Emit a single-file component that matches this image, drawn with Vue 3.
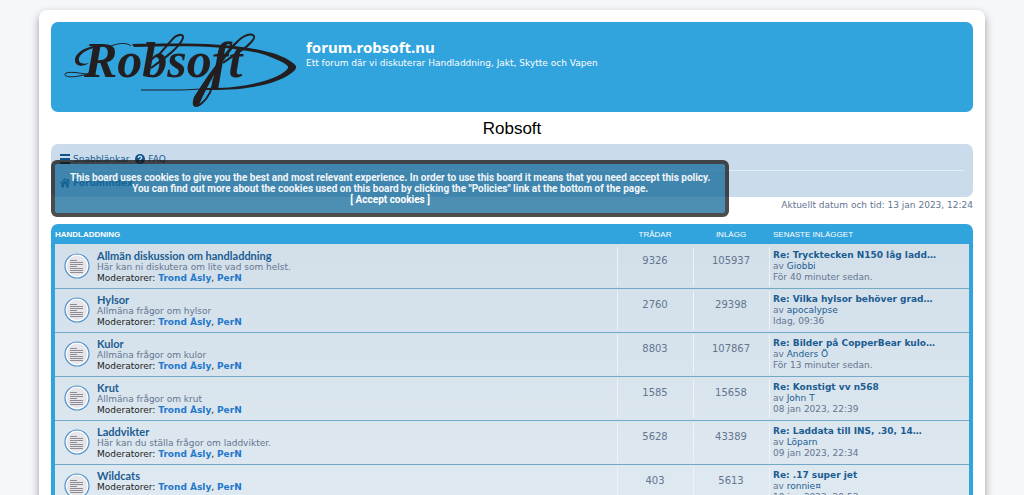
<script setup>
const forums = [
  { title: 'Allmän diskussion om handladdning', desc: 'Här kan ni diskutera om lite vad som helst.', topics: 9326, posts: 105937, last: 'Re: Trycktecken N150 låg ladd…', user: 'Giobbi', time: 'För 40 minuter sedan.' },
  { title: 'Hylsor', desc: 'Allmäna frågor om hylsor', topics: 2760, posts: 29398, last: 'Re: Vilka hylsor behöver grad…', user: 'apocalypse', time: 'Idag, 09:36' },
  { title: 'Kulor', desc: 'Allmäna frågor om kulor', topics: 8803, posts: 107867, last: 'Re: Bilder på CopperBear kulo…', user: 'Anders Ö', time: 'För 13 minuter sedan.' },
  { title: 'Krut', desc: 'Allmäna frågor om krut', topics: 1585, posts: 15658, last: 'Re: Konstigt vv n568', user: 'John T', time: '08 jan 2023, 22:39' },
  { title: 'Laddvikter', desc: 'Här kan du ställa frågor om laddvikter.', topics: 5628, posts: 43389, last: 'Re: Laddata till INS, .30, 14…', user: 'Löparn', time: '09 jan 2023, 22:34' },
  { title: 'Wildcats', desc: '', topics: 403, posts: 5613, last: 'Re: .17 super jet', user: 'ronnie¤', time: '10 jan 2023, 20:53' },
]
</script>

<template>
  <div class="wrap">
    <header class="headerbar">
      <a href="#" class="logo" aria-label="Robsoft">
        <svg width="236" height="78" viewBox="0 0 236 78">
          <text class="wordmark" x="21" y="45"><tspan class="initial">R</tspan>obsoft</text>
          <path d="M29 43C20 42 10 39 3 41C-1 44 6 46 16 44C22 43 27 41 30 38" class="swash" />
          <path d="M48 14C32 11 14 17 12 27C11 34 19 36 26 31C18 33 15 30 16 26C19 18 33 14 48 14Z" />
          <path d="M46 15C54 11 64 10 68 14" class="swash" />
          <path d="M69 12L71 15C128 13 177 14 205 24C220 30 226 33 225 36C220 45 187 57 142 56L142 58C187 59 218 51 231 39C234 36 234 34 230 31C224 26 214 22 205 20C172 11 126 11 69 12Z" />
          <path d="M78 58H116C126 58 132 57 142 57" class="swash" />
          <path d="M88 36C102 26 117 15 120 6C121 1 113 2 108 9L94 25" class="loop" />
          <path d="M160 31C172 22 188 14 191 6C192 1 184 1 176 8C160 22 148 43 134 63C128 73 132 77 139 71C147 64 150 55 151 46" class="loop" />
          <path d="M176 9C158 23 143 46 131 65C128 74 131 77 136 73C145 52 156 32 176 9Z" />
        </svg>
      </a>
      <div class="site">
        <h1>forum.robsoft.nu</h1>
        <p>Ett forum där vi diskuterar Handladdning, Jakt, Skytte och Vapen</p>
      </div>
    </header>

    <h2 class="board">Robsoft</h2>

    <div class="navarea">
      <nav class="navbar">
        <div class="navrow">
          <a href="#"><svg width="10" height="10" viewBox="0 0 10 10"><path d="M0 0h10v2H0zM0 4h10v2H0zM0 8h10v2H0z" /></svg><span>Snabblänkar</span></a>
          <a href="#"><svg width="10" height="10" viewBox="0 0 10 10"><circle cx="5" cy="5" r="5" /><path d="M3.3 3.9C3.3 1.6 6.8 1.7 6.7 3.7C6.7 5 5 4.8 5 6M5 7v1.4" fill="none" stroke="#cadceb" stroke-width="1.4" /></svg><span>FAQ</span></a>
        </div>
        <div class="navrow crumbs">
          <a href="#"><svg width="10" height="10" viewBox="0 0 10 10"><path d="M5 0L7.5 2.2V1H9V3.6L10 4.7L9.4 5.4L5 1.6L.6 5.4L0 4.7ZM5 2.5L8.7 5.6V9.4H6V6.5H4V9.4H1.3V5.6Z" /></svg><span>Forumindex</span></a>
        </div>
      </nav>
      <div class="cookies">
        This board uses cookies to give you the best and most relevant experience. In order to use this board it means that you need accept this policy.<br>
        You can find out more about the cookies used on this board by clicking the "Policies" link at the bottom of the page.<br>
        <a href="#">[ Accept cookies ]</a>
      </div>
    </div>

    <p class="now">Aktuellt datum och tid: 13 jan 2023, 12:24</p>

    <div class="forabg">
      <table>
        <thead>
          <tr>
            <th scope="col" class="name"><a href="#">HANDLADDNING</a></th>
            <th scope="col" class="num">TRÅDAR</th>
            <th scope="col" class="num">INLÄGG</th>
            <th scope="col" class="last">SENASTE INLÄGGET</th>
          </tr>
        </thead>
        <tbody>
          <tr v-for="f in forums" :key="f.title">
            <td>
              <div class="forum">
                <svg width="26" height="26" viewBox="0 0 26 26">
                  <circle cx="13" cy="13" r="11" fill="#e6e6ea" stroke="#fff" stroke-width="1.6" />
                  <circle cx="13" cy="13" r="12" fill="none" stroke="#5292cd" stroke-width="1.2" />
                  <path d="M6 7.5h7M6 9.5h13M6 11.5h13M6 13.500h7M6 15.500h13M6 17.500h13M6 19.500h13" stroke="#8d8d93" stroke-width="1.1" />
                </svg>
                <div>
                  <a href="#" class="title">{{ f.title }}</a>
                  <p v-if="f.desc">{{ f.desc }}</p>
                  <p class="mods">Moderatorer: <a href="#">Trond Åsly</a>, <a href="#">PerN</a></p>
                </div>
              </div>
            </td>
            <td class="num">{{ f.topics }}</td>
            <td class="num">{{ f.posts }}</td>
            <td class="last">
              <a href="#" class="subject">{{ f.last }}</a>
              <p>av <a href="#">{{ f.user }}</a></p>
              <p>{{ f.time }}</p>
            </td>
          </tr>
        </tbody>
      </table>
    </div>
  </div>
</template>

<style>
html { scrollbar-width: none; }
body { background: #f5f7fa; }
</style>

<style scoped>
.wrap {
  box-sizing: border-box;
  margin: 10px 39px;
  padding: 12px;
  background: #fff;
  border-radius: 8px;
  box-shadow: 0 4px 8px #999;
  font: 9px/11px Verdana, "DejaVu Sans", sans-serif;
  color: #647590;
}
a { color: #1b5c92; text-decoration: none; }
p, h1, h2 { margin: 0; }
.headerbar {
  display: flex;
  box-sizing: border-box;
  height: 90px;
  padding: 10px 12px;
  background: #31a3dd;
  border-radius: 7px;
  color: #fff;
}
.logo svg { display: block; fill: #231f20; }
.wordmark { font: italic bold 50px "Liberation Serif", serif; }
.swash { fill: none; stroke: #231f20; stroke-width: 1; }
.loop { fill: none; stroke: #231f20; stroke-width: 2; }
.site { padding: 6px 0 0 7px; }
h1 { font: bold 15px/18px "Noto Sans", sans-serif; }
.site p { padding-top: 2px; }
.board { margin: 8px 0 6px; font: 17px/18px "Liberation Sans", Arial, sans-serif; color: #000; text-align: center; }
.navarea { position: relative; }
.navbar { padding: 2px 9px; background: #cadceb; border-radius: 7px; }
.navrow { display: flex; box-sizing: border-box; gap: 6px; height: 24px; padding-top: 2px; align-items: center; }
.navrow a { display: flex; gap: 3px; align-items: center; }
.navrow svg { fill: #105289; }
.crumbs { height: 25px; padding-top: 0; border-top: 1px solid #e6eef5; font-weight: bold; }
.cookies {
  position: absolute;
  top: 16px;
  left: 0;
  padding: 8px 15px;
  border: 4px solid #111;
  border-radius: 6px;
  background: #12699a;
  opacity: .75;
  color: #fff;
  font: bold 10px/11px Roboto, Arial, sans-serif;
  text-align: center;
  white-space: nowrap;
}
.cookies a { color: #fff; }
.now { margin: 3px 0 13px; text-align: right; }
.forabg { padding: 0 4px 4px; background: #31a3dd; border-radius: 7px; }
table { width: 100%; border-collapse: collapse; table-layout: fixed; }
th { height: 20px; padding: 2px 0 0; box-sizing: border-box; font: 8px/10px "Liberation Sans", Arial, sans-serif; color: #fff; text-align: left; }
th.name { font-weight: bold; }
th a { color: #fff; }
th.num, td.num { width: 76px; text-align: center; }
th.last { width: 200px; padding-left: 4px; }
tbody { background: linear-gradient(#d2dfe9, #dfe9f1); }
tbody tr { height: 44px; }
tbody tr + tr { box-shadow: inset 0 1px #72a9c8; }
td { padding: 6px 0 0; vertical-align: top; }
td + td { background: linear-gradient(#edf3f8, #edf3f8) 0 3px / 1px calc(100% - 5px) no-repeat; }
td.num { padding: 11px 0 0; font-size: 10px; }
td.last { padding: 6px 0 0 4px; }
.forum { display: flex; gap: 7px; padding-left: 9px; }
.forum svg { margin-top: 3px; }
.title { display: block; font: bold 11px/12px Lato, sans-serif; }
.mods { color: #222; }
.mods a { font-weight: bold; color: #2277cc; }
.subject { display: block; font-weight: bold; }
</style>
